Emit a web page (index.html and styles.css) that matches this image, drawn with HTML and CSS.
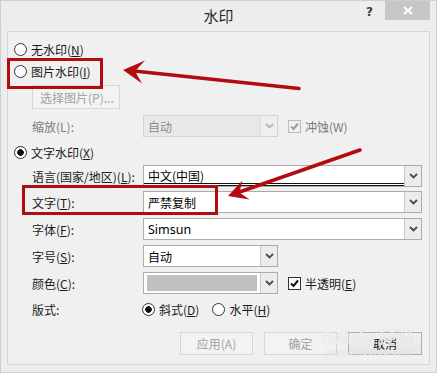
FILE: index.html
```html
<!DOCTYPE html>
<html lang="zh-CN">
<head>
<meta charset="utf-8">
<link rel="stylesheet" href="styles.css">
</head>
<body>
<div class="window">
  <div class="titlebar">
    <div></div>
    <div class="title">水印</div>
    <div class="tb-right">
      <span class="help">?</span>
      <span class="close"><svg width="10" height="9" viewBox="0 0 10 9"><path d="M1 1l8 7M9 1L1 8" stroke="#fff" stroke-width="2"/></svg></span>
    </div>
  </div>
  <div class="panel">
    <div class="row radio-row"><span class="radio"></span><span>无水印(<u>N</u>)</span></div>
    <div class="row radio-row"><span class="radio"></span><span>图片水印(<u>I</u>)</span></div>
    <div class="row btn-row mt3"><span class="btn disabled pick">选择图片(P)...</span></div>
    <div class="row field mt6">
      <span class="label dim">缩放(L):</span>
      <div class="combo short off"><span class="val">自动</span><span class="drop"><svg class="chev" viewBox="0 0 9 6"><path d="M1 1l3.5 3.5L8 1"/></svg></span></div>
      <span class="check-item dim"><span class="box off"><svg viewBox="0 0 11 11"><path d="M2 5.5l2.5 2.5L9 2.5"/></svg></span>冲蚀(W)</span>
    </div>
    <div class="row radio-row mt4"><span class="radio on"></span><span>文字水印(<u>X</u>)</span></div>
    <div class="row field mt2">
      <span class="label">语言(国家/地区)(<u>L</u>):</span>
      <div class="combo wide"><span class="val focus">中文(中国)</span><span class="drop"><svg class="chev" viewBox="0 0 9 6"><path d="M1 1l3.5 3.5L8 1"/></svg></span></div>
    </div>
    <div class="row field mt4">
      <span class="label">文字(<u>T</u>):</span>
      <div class="combo wide"><span class="val">严禁复制</span><span class="drop"><svg class="chev" viewBox="0 0 9 6"><path d="M1 1l3.5 3.5L8 1"/></svg></span></div>
    </div>
    <div class="row field mt5">
      <span class="label">字体(<u>F</u>):</span>
      <div class="combo wide"><span class="val latin">Simsun</span><span class="drop"><svg class="chev" viewBox="0 0 9 6"><path d="M1 1l3.5 3.5L8 1"/></svg></span></div>
    </div>
    <div class="row field mt5">
      <span class="label">字号(<u>S</u>):</span>
      <div class="combo short"><span class="val">自动</span><span class="drop"><svg class="chev" viewBox="0 0 9 6"><path d="M1 1l3.5 3.5L8 1"/></svg></span></div>
    </div>
    <div class="row field mt5">
      <span class="label">颜色(<u>C</u>):</span>
      <div class="combo short"><span class="val"><span class="swatch"></span></span><span class="drop"><svg class="chev" viewBox="0 0 9 6"><path d="M1 1l3.5 3.5L8 1"/></svg></span></div>
      <span class="check-item"><span class="box"><svg viewBox="0 0 11 11"><path d="M2 5.5l2.5 2.5L9 2.5"/></svg></span>半透明(<u>E</u>)</span>
    </div>
    <div class="row field mt4">
      <span class="label layout-label">版式:</span>
      <span class="opt"><span class="radio on"></span>斜式(<u>D</u>)</span>
      <span class="opt"><span class="radio"></span>水平(<u>H</u>)</span>
    </div>
    <div class="row buttons">
      <span class="btn disabled">应用(A)</span>
      <span class="btn disabled">确定</span>
      <span class="btn">取消</span>
    </div>
  </div>
</div>
<svg class="marks" width="437" height="373" viewBox="0 0 437 373">
  <rect x="8.5" y="59.5" width="93" height="28" fill="none" stroke="#b20b10" stroke-width="3"/>
  <rect x="23.5" y="186.5" width="193" height="27" fill="none" stroke="#b20b10" stroke-width="3"/>
  <path d="M299 88.5L134 71" stroke="#b20b10" stroke-width="3.5" stroke-linecap="round"/>
  <polygon points="123,70 145,60.5 135,71.3 142,83.5" fill="#b20b10"/>
  <path d="M360 150L238 192.5" stroke="#b20b10" stroke-width="3.5" stroke-linecap="round"/>
  <polygon points="228,196 242.5,180.5 239.4,192.4 249.5,199.5" fill="#b20b10"/>
</svg>
<div class="wm"><span class="wm-logo">Bai<b>du</b>经验</span><span class="wm-url">jingyan.baidu.com</span></div>
</body>
</html>
```
FILE: styles.css
```css
html, body {
  margin: 0;
  padding: 0;
}
body {
  position: relative;
  width: 437px;
  height: 373px;
  overflow: hidden;
  background: #ececec;
}
.window {
  width: 437px;
  height: 373px;
  box-sizing: border-box;
  border: 1px solid #cfcfcf;
  background: #ededed;
  display: flex;
  flex-direction: column;
  font-family: "Noto Sans CJK SC", "Microsoft YaHei", sans-serif;
  font-size: 12px;
  color: #1b1b1b;
}
u { text-decoration: underline; text-underline-offset: 1px; }
.titlebar {
  height: 30px;
  flex-shrink: 0;
  display: grid;
  grid-template-columns: 1fr auto 1fr;
}
.title {
  font-size: 15px;
  line-height: 29px;
  color: #2a2a2a;
}
.tb-right {
  display: flex;
  justify-content: flex-end;
  align-items: flex-start;
  padding-right: 6px;
}
.help {
  font-family: "DejaVu Sans", sans-serif;
  font-weight: bold;
  font-size: 12px;
  line-height: 12px;
  color: #3a3a3a;
  margin-top: 5px;
  margin-right: 12px;
}
.close {
  width: 45px;
  height: 19px;
  background: #c7c7c7;
  display: flex;
  align-items: center;
  justify-content: center;
}
.panel {
  flex: 1;
  margin: 0 6px 7px 6px;
  border: 1px solid #d5d5d5;
  background: #f0f0f0;
  padding: 6px 7px 0 6px;
  display: flex;
  flex-direction: column;
}
.row {
  display: flex;
  align-items: center;
  height: 22px;
  flex-shrink: 0;
  white-space: nowrap;
}
.mt2 { margin-top: 2px; }
.mt3 { margin-top: 3px; }
.mt4 { margin-top: 4px; }
.mt5 { margin-top: 5px; }
.mt6 { margin-top: 6px; }
.radio {
  width: 13px;
  height: 13px;
  box-sizing: border-box;
  border: 1px solid #333;
  border-radius: 50%;
  background: #fff;
  flex-shrink: 0;
  margin-right: 4px;
}
.radio.on {
  background: radial-gradient(circle, #111 0 3px, #fff 3.6px);
}
.btn-row {
  height: 24px;
  padding-left: 18px;
}
.btn {
  box-sizing: border-box;
  height: 23px;
  width: 73px;
  border: 1px solid #adadad;
  background: linear-gradient(#f2f2f2, #e6e6e6);
  display: flex;
  align-items: center;
  justify-content: center;
  color: #111;
}
.btn.disabled {
  border-color: #d6d6d6;
  background: #f3f3f3;
  color: #a2a2a2;
}
.btn.pick {
  width: 88px;
  height: 24px;
  justify-content: flex-start;
  padding-left: 7px;
}
.field {
  padding-left: 18px;
}
.label {
  width: 111px;
  flex-shrink: 0;
}
.layout-label { width: 110px; }
.dim { color: #7a7a7a; }
.combo {
  box-sizing: border-box;
  height: 22px;
  border: 1px solid #acacac;
  background: #fff;
  display: flex;
  align-items: stretch;
}
.combo.wide { width: 279px; }
.combo.short { width: 135px; }
.combo.off {
  border-color: #d2d2d2;
  background: #e8e8e8;
  color: #8a8a8a;
}
.val {
  flex: 1;
  display: flex;
  align-items: center;
  padding-left: 4px;
  color: #000;
}
.off .val { color: #8a8a8a; }
.val.latin { font-family: "Noto Sans", sans-serif; font-size: 12.5px; }
.val.focus {
  box-sizing: border-box;
  border-bottom: 3px double #111;
  padding-top: 2px;
}
.drop {
  width: 16px;
  border-left: 1px solid #c6c6c6;
  background: #ececec;
  display: flex;
  align-items: center;
  justify-content: center;
}
.off .drop { background: #efefef; border-left-color: #dadada; }
.chev {
  width: 9px;
  height: 6px;
  fill: none;
  stroke: #4a4a4a;
  stroke-width: 1.8;
}
.off .chev { stroke: #b5b5b5; }
.swatch {
  display: block;
  width: 110px;
  height: 16px;
  background: #c0c0c0;
}
.combo .val:has(.swatch) { padding-left: 3px; }
.check-item {
  display: flex;
  align-items: center;
  margin-left: 10px;
}
.box {
  width: 13px;
  height: 13px;
  box-sizing: border-box;
  border: 1px solid #333;
  background: #fff;
  margin-right: 4px;
  display: flex;
  align-items: center;
  justify-content: center;
}
.box svg {
  width: 11px;
  height: 11px;
  fill: none;
  stroke: #111;
  stroke-width: 2;
}
.box.off { border-color: #bcbcbc; background: #f0f0f0; }
.box.off svg { stroke: #9c9c9c; }
.opt {
  display: flex;
  align-items: center;
  margin-right: 13px;
}
.buttons {
  height: 23px;
  margin-top: 12px;
  justify-content: flex-end;
  gap: 11px;
}
.buttons .btn:last-child { width: 74px; }
.marks {
  position: absolute;
  left: 0;
  top: 0;
  pointer-events: none;
}
.wm {
  position: absolute;
  left: 318px;
  top: 327px;
  width: 100px;
  display: flex;
  flex-direction: column;
  align-items: center;
  white-space: nowrap;
  pointer-events: none;
  font-family: "Noto Sans CJK SC", sans-serif;
  color: rgba(255, 255, 255, 0.7);
  text-shadow: 0 0 1px rgba(160, 160, 160, 0.5);
}
.wm-logo { font-size: 17px; line-height: 20px; font-weight: bold; letter-spacing: 1px; }
.wm-logo b { font-weight: bold; margin: 0 2px; }
.wm-url { font-size: 9px; line-height: 10px; letter-spacing: 0.5px; }
```
